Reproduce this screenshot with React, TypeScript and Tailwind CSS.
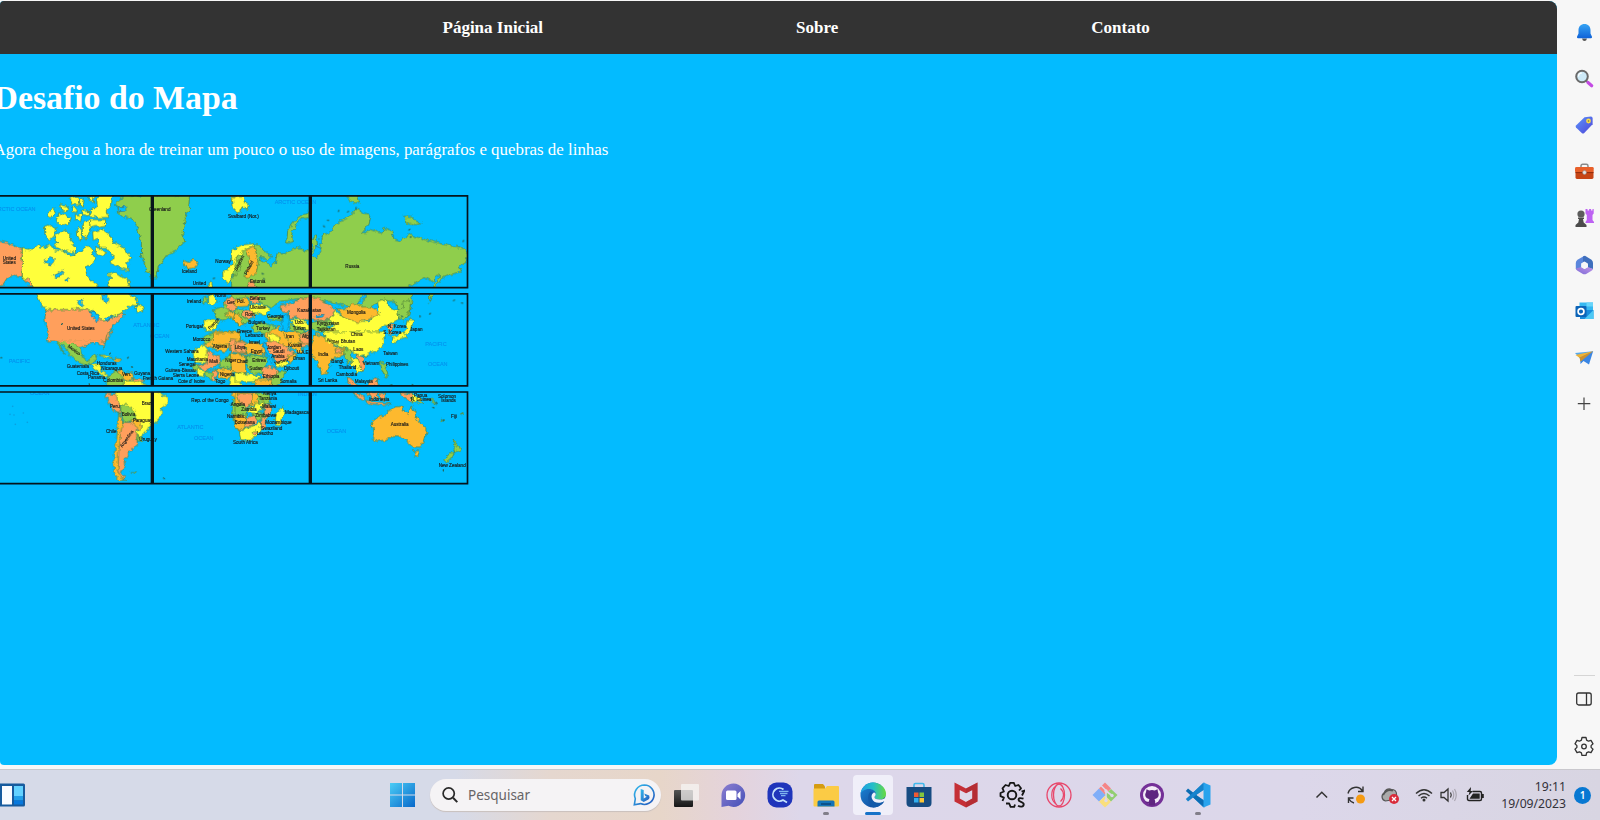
import React from "react";

type Label = [number, number, string, number?];
type Land = [string, string];

const Y = "#ffff3b";
const G = "#8fce4c";
const O = "#ff9f5c";
const A = "#fdb92e";

const northWest: Land[] = [
  [O, "M-20,164 L20,174 L45,183 L67,190 L67,278 L40,272 L22,278 L8,300 L-20,308Z"],
  [O, "M67,278 L90,284 L103,312 L88,300Z"],
  [Y, "M67,190 L85,196 L105,188 L112,180 L125,190 L150,180 L165,195 L190,198 L215,215 L235,202 L250,195 L262,178 L275,195 L280,212 L290,225 L278,232 L262,245 L258,265 L270,283 L290,298 L292,315 L102,315 L90,285 L67,278Z"],
  [Y, "M330,315 L325,292 L335,280 L325,266 L345,260 L365,275 L385,285 L395,315Z"],
  [Y, "M133,124 L150,120 L170,132 L162,150 L146,166 L135,150Z"],
  [Y, "M165,150 L195,133 L213,150 L210,165 L228,185 L225,207 L205,200 L190,197 L160,183 L175,172 L162,166Z"],
  [Y, "M229,135 L240,128 L248,142 L244,165 L230,158Z"],
  [Y, "M250,110 L270,105 L270,135 L258,165 L250,150Z"],
  [Y, "M278,140 L305,133 L330,148 L345,175 L370,188 L393,220 L380,235 L388,256 L355,248 L330,234 L340,215 L318,187 L300,187 L292,160 L280,167Z"],
  [Y, "M285,188 L302,190 L320,205 L300,214 L288,207Z"],
  [Y, "M140,94 L158,68 L168,78 L155,98Z"],
  [Y, "M168,107 L178,84 L195,90 L214,98 L207,118 L180,120Z"],
  [Y, "M180,58 L202,64 L200,80 L182,76Z"],
  [Y, "M210,38 L234,34 L237,60 L218,58Z"],
  [Y, "M238,46 L252,42 L250,66 L240,62Z"],
  [Y, "M216,68 L232,70 L230,82 L216,80Z"],
  [Y, "M226,88 L245,90 L242,110 L226,104Z"],
  [Y, "M266,34 L282,34 L280,52 L268,50Z"],
  [Y, "M290,40 L300,26 L338,26 L334,62 L318,76 L324,97 L290,98 L266,90 L276,70 L292,64Z"],
  [Y, "M246,76 L266,76 L264,92 L246,88Z"],
  [Y, "M270,104 L317,104 L316,121 L280,126 L268,118Z"],
  [G, "M350,50 L378,30 L569,30 L565,80 L556,100 L548,150 L555,170 L525,198 L500,210 L475,245 L470,276 L455,280 L440,255 L425,215 L424,170 L413,130 L395,100 L370,95 L352,78Z"],
  [A, "M551,226 L565,233 L582,222 L594,236 L582,249 L562,252Z"],
  [Y, "M693,32 L725,32 L725,78 L712,82 L706,62 L695,50Z"],
  [Y, "M668,262 L690,248 L700,225 L725,195 L725,300 L705,300 L702,265 L685,294 L670,285Z"],
  [G, "M705,240 L725,205 L725,302 L698,302Z"],
  [Y, "M624,296 L636,292 L638,310 L626,310Z"],
  [Y, "M108,320 L380,320 L414,345 L412,362 L390,360 L372,378 L358,388 L338,392 L310,410 L298,398 L285,378 L262,374 L140,374 L120,352Z"],
  [Y, "M408,366 L425,360 L432,380 L408,382Z"],
  [O, "M140,374 L262,374 L278,382 L290,392 L302,402 L312,410 L340,396 L360,388 L368,380 L374,390 L358,405 L352,415 L338,422 L333,438 L320,450 L316,468 L140,468 L146,444 L136,420 L135,395Z"],
  [G, "M606,338 L620,334 L622,350 L610,358Z"],
  [Y, "M626,330 L642,326 L652,352 L636,364 L626,356Z"],
  [G, "M640,374 L668,366 L678,345 L694,375 L690,400 L668,408 L650,398Z"],
  [O, "M678,342 L700,332 L715,344 L710,372 L690,378 L678,368Z"],
  [Y, "M612,406 L655,406 L648,428 L638,438 L618,438 L612,425Z"],
  [A, "M676,388 L700,378 L714,402 L725,418 L715,422 L698,400Z"],
  [A, "M640,446 L720,438 L720,476 L640,480Z"],
];

const northEast: Land[] = [
  [Y, "M-8,36 L25,36 L28,52 L40,60 L36,74 L22,62 L16,82 L-5,74Z"],
  [G, "M155,175 L158,135 L178,108 L205,86 L222,82 L222,98 L198,102 L182,120 L170,148 L172,170Z"],
  [G, "M0,206 L30,188 L66,176 L92,200 L110,214 L100,226 L80,214 L76,230 L95,230 L108,246 L122,230 L126,208 L150,206 L170,196 L190,184 L205,196 L230,200 L232,156 L244,150 L248,190 L258,196 L258,160 L268,142 L282,150 L300,118 L340,98 L365,70 L385,84 L408,90 L402,118 L378,148 L410,134 L440,146 L448,130 L470,138 L478,162 L500,168 L520,148 L560,160 L600,172 L640,182 L678,186 L702,208 L690,232 L672,244 L680,258 L650,268 L620,280 L600,310 L585,350 L582,322 L606,290 L618,268 L600,272 L596,290 L570,278 L548,290 L520,306 L532,340 L525,390 L495,400 L480,350 L440,345 L400,370 L330,362 L285,350 L200,340 L130,350 L110,370 L90,360 L60,340 L-10,340 L-10,280 L20,250 L12,230Z"],
  [Y, "M-10,196 L20,180 L60,176 L62,184 L35,192 L15,205 L-10,240Z"],
  [A, "M34,194 L58,184 L64,205 L70,235 L64,262 L48,278 L30,276 L32,258 L46,238 L40,215Z"],
  [O, "M36,292 L60,290 L66,310 L40,315Z"],
  [G, "M328,28 L366,30 L374,50 L356,56Z"],
  [G, "M506,94 L530,94 L545,110 L562,112 L540,122 L518,116Z"],
  [A, "M0,345 L30,338 L44,350 L38,364 L0,366Z"],
  [O, "M40,338 L70,332 L74,350 L50,356Z"],
  [Y, "M42,360 L80,356 L104,372 L90,392 L74,384 L60,388 L44,376Z"],
  [O, "M20,380 L50,376 L60,394 L38,404 L22,394Z"],
  [G, "M0,372 L22,376 L24,396 L46,408 L30,418 L0,392Z"],
  [A, "M0,386 L12,386 L28,420 L14,424 L-6,400Z"],
  [G, "M50,424 L78,414 L120,424 L126,440 L90,446 L58,440Z"],
  [G, "M96,394 L136,394 L140,404 L104,404Z"],
  [O, "M135,362 L170,354 L205,338 L250,340 L290,364 L302,378 L282,402 L246,408 L230,400 L205,408 L186,396 L164,400 L160,380 L138,382Z"],
  [Y, "M168,404 L190,400 L232,424 L222,436 L180,424Z"],
  [G, "M166,418 L188,424 L214,440 L200,446 L170,436Z"],
  [G, "M232,412 L282,404 L306,416 L270,426 L300,436 L250,442 L232,430Z"],
  [A, "M88,448 L130,424 L140,442 L190,444 L196,475 L205,505 L170,490 L130,480 L100,470Z"],
  [O, "M190,450 L222,440 L230,470 L205,490 L194,475Z"],
  [Y, "M282,402 L302,378 L338,402 L400,410 L432,380 L428,350 L450,342 L470,372 L494,378 L490,404 L468,414 L450,420 L436,428 L432,440 L446,460 L446,468 L270,468 L272,440 L300,420Z"],
  [A, "M306,372 L340,370 L350,356 L380,366 L410,366 L434,382 L406,402 L370,412 L330,400Z"],
  [G, "M486,376 L500,370 L505,350 L524,345 L525,380 L505,408 L492,400Z"],
  [O, "M455,420 L478,418 L476,430 L468,434 L474,446 L464,450Z"],
  [Y, "M520,404 L538,406 L530,420 L526,440 L500,458 L480,464 L500,448 L514,432Z"],
];

const southWest: Land[] = [
  [O, "M144,-8 L335,-8 L316,20 L312,44 L304,30 L290,22 L262,28 L240,38 L216,24 L190,16 L165,8Z"],
  [G, "M168,12 L200,18 L226,26 L244,42 L248,66 L266,80 L276,64 L290,62 L284,80 L262,90 L240,86 L218,70 L200,44 L178,22 L186,46 L196,58 L180,40Z"],
  [Y, "M298,60 L320,60 L340,70 L322,68Z"],
  [A, "M344,70 L362,72 L356,80 L342,76Z"],
  [Y, "M270,88 L298,90 L302,108 L318,118 L328,128 L310,122 L290,106Z"],
  [G, "M330,118 L350,104 L366,122 L372,140 L364,160 L318,160Z"],
  [A, "M352,104 L372,112 L396,112 L402,130 L382,140 L372,134Z"],
  [O, "M400,132 L430,134 L426,150 L400,150Z"],
  [Y, "M372,138 L400,138 L440,150 L440,168 L366,168Z"],
  [Y, "M345,166 L470,166 L500,184 L503,200 L486,220 L484,242 L466,262 L448,272 L440,288 L420,308 L408,296 L424,272 L400,255 L408,240 L385,222 L360,208 L345,196Z"],
  [O, "M316,176 L350,178 L352,196 L360,210 L360,236 L342,226 L325,200Z"],
  [G, "M362,212 L378,208 L396,220 L408,240 L396,258 L374,262 L362,240Z"],
  [A, "M392,254 L408,250 L424,268 L420,284 L400,274Z"],
  [G, "M408,300 L424,306 L428,318 L410,318Z"],
  [A, "M356,236 L370,262 L360,320 L356,380 L366,428 L380,434 L360,438 L344,420 L340,380 L350,310Z"],
  [O, "M370,262 L396,262 L414,280 L410,300 L412,328 L402,342 L384,346 L386,360 L372,372 L374,390 L364,412 L378,434 L362,428 L354,400 L356,350 L362,290Z"],
  [G, "M396,410 L410,410 L406,416Z"],
  [A, "M640,-10 L720,-12 L690,35 L672,54 L640,40 L612,28Z"],
  [G, "M606,8 L636,-6 L644,8 L620,26Z"],
  [Y, "M580,46 L612,30 L624,44 L620,84 L582,82Z"],
  [O, "M620,46 L656,66 L658,84 L636,100 L614,108 L592,94 L622,84Z"],
  [G, "M656,84 L690,58 L714,66 L706,90 L676,100 L658,96Z"],
  [O, "M684,20 L720,4 L720,52 L690,44Z"],
  [A, "M706,62 L722,54 L722,115 L704,106Z"],
  [G, "M576,90 L600,94 L596,112 L580,104Z"],
  [Y, "M590,104 L616,108 L612,126 L594,122Z"],
  [G, "M616,110 L640,110 L638,132 L618,128Z"],
  [A, "M650,102 L694,100 L704,112 L682,130 L658,128Z"],
  [O, "M636,108 L650,108 L648,142 L636,138Z"],
  [Y, "M690,126 L724,110 L724,158 L686,152Z"],
  [A, "M690,168 L724,168 L724,186 L706,190Z"],
  [G, "M697,194 L724,192 L724,232 L696,236Z"],
  [A, "M698,236 L724,236 L724,300 L710,282Z"],
];

const southEast: Land[] = [
  [O, "M-14,14 L34,20 L34,58 L-12,50Z"],
  [A, "M-14,54 L32,62 L32,118 L-10,110Z"],
  [A, "M34,22 L84,26 L90,58 L36,58Z"],
  [O, "M0,20 L28,22 L30,54 L0,46Z"],
  [G, "M34,62 L92,62 L98,80 L84,112 L58,116 L36,98Z"],
  [O, "M84,102 L102,92 L132,108 L126,132 L92,132 L78,120Z"],
  [G, "M128,112 L152,108 L140,140 L116,158 L106,140Z"],
  [Y, "M0,116 L60,118 L76,126 L60,140 L0,142Z"],
  [A, "M60,134 L112,134 L106,158 L60,158Z"],
  [O, "M90,22 L126,14 L150,34 L182,58 L162,76 L128,84 L110,60 L98,38Z"],
  [Y, "M118,82 L152,74 L160,88 L124,98Z"],
  [A, "M158,62 L184,54 L182,70 L164,84Z"],
  [Y, "M98,-6 L128,2 L134,20 L106,20Z"],
  [A, "M140,-10 L196,-8 L200,18 L186,28 L160,18Z"],
  [O, "M190,0 L228,0 L228,26 L200,26Z"],
  [A, "M240,-5 L280,12 L300,32 L330,38 L326,60 L290,74 L276,112 L262,118 L244,78 L230,58 L230,30Z"],
  [Y, "M268,-10 L446,-10 L448,24 L430,46 L398,58 L370,64 L350,48 L332,38 L300,28 L270,12Z"],
  [G, "M326,42 L346,44 L352,78 L340,86 L328,66Z"],
  [O, "M300,42 L322,40 L320,56 L302,54Z"],
  [Y, "M348,66 L370,72 L388,92 L386,106 L368,112 L362,94 L350,96Z"],
  [O, "M366,60 L384,66 L392,98 L378,110 L374,88Z"],
  [G, "M386,62 L398,62 L394,68Z"],
  [G, "M436,78 L450,88 L460,122 L450,128 L440,104Z"],
  [Y, "M472,8 L504,-8 L514,6 L490,14 L478,22Z"],
  [O, "M336,126 L352,134 L368,152 L358,154 L340,142Z"],
  [O, "M398,140 L426,128 L430,152 L400,156Z"],
  [A, "M0,172 L66,172 L72,206 L46,214 L0,208Z"],
  [O, "M6,178 L54,174 L48,210 L22,222Z"],
  [G, "M62,174 L102,176 L106,206 L76,210Z"],
  [G, "M0,208 L34,212 L34,240 L0,240Z"],
  [Y, "M60,206 L84,202 L82,224 L60,236 L38,232 L38,218 L58,216Z"],
  [O, "M84,210 L108,210 L106,238 L92,254 L90,280 L74,286 L76,262 L90,244Z"],
  [G, "M54,236 L84,232 L90,246 L72,258 L58,252Z"],
  [A, "M0,242 L34,242 L30,278 L12,290 L0,270Z"],
  [O, "M32,246 L56,244 L66,260 L48,276 L30,276Z"],
  [Y, "M12,286 L48,276 L74,262 L76,286 L64,306 L42,316 L18,314Z"],
  [O, "M52,288 L64,288 L62,298 L52,298Z"],
  [Y, "M122,240 L142,216 L148,228 L136,272 L122,270Z"],
  [O, "M356,168 L374,178 L392,192 L380,196 L362,184Z"],
  [O, "M396,172 L426,172 L430,190 L410,194Z"],
  [O, "M434,174 L452,176 L448,196 L438,192Z"],
  [O, "M392,196 L436,202 L470,206 L440,210 L396,204Z"],
  [O, "M496,172 L530,178 L530,200 L510,190Z"],
  [Y, "M530,178 L552,188 L564,206 L546,200 L530,202Z"],
  [A, "M408,262 L422,250 L446,242 L464,228 L480,216 L502,214 L506,228 L520,238 L528,210 L540,232 L546,252 L566,270 L576,290 L568,318 L556,336 L534,336 L512,318 L500,304 L478,302 L452,314 L424,320 L414,308 L418,290Z"],
  [A, "M536,348 L554,348 L548,364 L540,362Z"],
  [G, "M654,314 L670,332 L680,342 L660,354 L656,342 L664,336Z"],
  [G, "M626,374 L646,354 L658,352 L652,368 L634,384Z"],
  [G, "M576,186 L590,194 L608,208 L594,204Z"],
  [G, "M618,250 L630,256 L622,258Z"],
  [G, "M672,238 L682,234 L678,240Z"],
];

const lakes = [
  "M132,228 L150,218 L166,224 L156,240 L138,236Z",
  "M160,272 L178,264 L190,254 L186,272 L168,278Z",
  "M194,286 L208,278 L202,290Z",
  "M304,328 L324,328 L322,356 L312,352Z",
  "M232,350 L246,338 L250,356 L240,366Z",
  "M268,378 L284,380 L298,396 L288,414 L280,396Z",
  "M312,398 L334,394 L320,408Z",
  "M352,66 L376,64 L378,78 L356,80Z",
  "M845,396 L862,386 L868,402 L864,430 L852,440 L846,420Z",
  "M946,392 L972,388 L968,396 L950,398Z",
  "M1072,355 L1096,328 L1100,334 L1084,358Z",
  "M935,210 L950,180 L962,200 L946,222Z",
  "M790,470 L800,480 L830,545 L824,548 L790,492Z",
];

const labels: Label[] = [
  [8, 225, "United"], [8, 238, "States"], [447, 77, "Greenland"], [546, 264, "Iceland"], [646, 235, "Norway"],
  [578, 300, "United"], [684, 98, "Svalbard (Nor.)"], [201, 435, "United States"], [561, 353, "Ireland"],
  [557, 429, "Portugal"], [578, 467, "Morocco"], [645, 335, "North"], [680, 357, "Ger."], [630, 435, "France", -48],
  [1036, 249, "Russia"], [750, 295, "Estonia"], [710, 258, "Sweden", -62], [740, 270, "Finland", -62], [711, 355, "Pol."],
  [750, 344, "Belarus"], [750, 371, "Ukraine"], [735, 392, "Rom."], [802, 399, "Georgia"], [768, 434, "Turkey"],
  [745, 416, "Bulgaria"], [710, 444, "Greece"], [736, 457, "Lebanon"], [892, 380, "Kazakhstan"], [884, 418, "Uzb."],
  [878, 434, "Turkm."], [858, 458, "Iran"], [906, 458, "Afg."], [950, 420, "Kyrgyzstan"], [950, 437, "Tajikistan"],
  [1041, 387, "Mongolia"], [1052, 453, "China"], [1164, 430, "N. Korea"], [1150, 448, "S. Korea"], [1230, 437, "Japan"],
  [202, 486, "Mexico", 36], [200, 550, "Guatemala"], [290, 540, "Honduras"], [304, 555, "Nicaragua"],
  [230, 571, "Costa Rica"], [264, 581, "Panama"], [310, 592, "Colombia"], [366, 573, "Ven."], [402, 570, "Guyana"],
  [428, 585, "French Guiana"], [496, 503, "Western Sahara"], [560, 529, "Mauritania"], [536, 544, "Senegal"],
  [496, 562, "Guinea-Bissau"], [518, 576, "Sierra Leone"], [534, 595, "Cote d' Ivoire"], [646, 595, "Togo"],
  [638, 490, "Algeria"], [628, 534, "Mali"], [676, 530, "Niger"], [660, 574, "Nigeria"], [704, 492, "Libya"],
  [710, 535, "Chad"], [746, 478, "Israel"], [752, 505, "Egypt"], [757, 530, "Eritrea"], [748, 555, "Sudan"],
  [788, 580, "Ethiopia"], [840, 595, "Somalia"], [852, 554, "Djibouti"], [800, 491, "Jordan"], [818, 505, "Saudi"],
  [814, 519, "Arabia"], [824, 540, "Yemen", -18], [890, 506, "U.A.E."], [878, 526, "Oman"], [864, 485, "Kuwait"],
  [955, 514, "India"], [980, 469, "Nepal", 12], [1022, 474, "Bhutan"], [1060, 498, "Laos"], [994, 535, "Bangl."],
  [1016, 552, "Thailand"], [1008, 572, "Cambodia"], [1088, 541, "Vietnam"], [1150, 510, "Taiwan"],
  [1158, 544, "Philippines"], [954, 590, "Sri Lanka"], [1064, 594, "Malaysia"], [330, 669, "Peru"], [425, 661, "Brazil"],
  [365, 692, "Bolivia"], [398, 712, "Paraguay"], [318, 745, "Chile"], [418, 768, "Uruguay"], [367, 788, "Argentina", -55],
  [574, 650, "Rep. of the Congo"], [692, 663, "Angola"], [681, 698, "Namibia"],
  [776, 644, "Tanzania"], [790, 629, "Kenya"], [786, 669, "Malawi"], [724, 679, "Zambia"], [766, 697, "Zimbabwe"],
  [796, 716, "Mozambique"], [855, 688, "Madagascar"], [784, 736, "Swaziland"], [770, 750, "Lesotho"],
  [699, 776, "South Africa"], [704, 716, "Botswana"], [1108, 648, "Indonesia"], [1242, 635, "Papua"],
  [1232, 648, "N. Guinea"], [1172, 724, "Australia"], [1314, 638, "Solomon"], [1324, 652, "Islands"],
  [1353, 698, "Fiji"], [1316, 847, "New Zealand"],
];

const waters: Label[] = [
  [-18, 79, "ARCTIC OCEAN"], [824, 57, "ARCTIC OCEAN"], [400, 425, "ATLANTIC"], [450, 458, "OCEAN"],
  [26, 533, "PACIFIC"], [90, 629, "OCEAN"], [532, 732, "ATLANTIC"], [582, 766, "OCEAN"], [980, 744, "OCEAN"],
  [1276, 483, "PACIFIC"], [1284, 543, "OCEAN"], [894, 634, "INDIAN"],
];

const specks = [
  [4, 518], [492, 880], [268, 598], [1016, 78], [1044, 80], [984, 106], [972, 124], [1068, 70],
  [1390, 168], [1362, 346], [1386, 354], [1206, 394], [1260, 394], [1290, 386], [384, 518], [396, 546],
  [1238, 600], [1330, 856], [330, 506], [642, 280], [788, 266], [792, 282], [1232, 156], [1228, 134],
  [1174, 600], [1300, 668], [1310, 654], [1330, 706], [186, 417],
];

const atolls = [[30, 688], [42, 690], [70, 684], [46, 718], [82, 712], [38, 664]];

const Terrain = ({ lands, x, y }: { lands: Land[]; x: number; y: number }) => (
  <g transform={`translate(${x} ${y})`}>
    {lands.map(([fill, d], i) => (
      <path key={i} d={d} fill={fill} />
    ))}
  </g>
);

const WorldMap = () => (
  <svg className="block h-[305px] w-[480px]" viewBox="0 0 1440 915" fontFamily="Liberation Sans, sans-serif">
    <defs>
      <filter id="coast" x="0" y="0" width="100%" height="100%" colorInterpolationFilters="sRGB">
        <feTurbulence type="fractalNoise" baseFrequency="0.075" numOctaves="2" seed="4" />
        <feDisplacementMap in="SourceGraphic" scale="17" xChannelSelector="R" yChannelSelector="G" />
      </filter>
      <clipPath id="tiles">
        <path d="M0,32H1404V308H0Z M0,326H1404V602H0Z M0,621H1404V896H0Z" />
      </clipPath>
    </defs>
    <path d="M0,32H1404V308H0Z M0,326H1404V602H0Z M0,621H1404V896H0Z" fill="#00bfff" />
    <g clipPath="url(#tiles)">
      <g filter="url(#coast)" stroke="#4b7c38" strokeWidth="2" strokeLinejoin="round">
        <Terrain lands={southWest} x={0} y={450} />
        <Terrain lands={northWest} x={0} y={0} />
        <Terrain lands={northEast} x={705} y={0} />
        <Terrain lands={southEast} x={705} y={450} />
        <path d="M160,466H306L300,474L200,474Z" fill={O} stroke="none" />
        <path d="M984,462H1140V474H984Z" fill={Y} stroke="none" />
        <g fill="#00bfff" stroke="#2b6f86">
          {lakes.map((d) => (
            <path key={d} d={d} />
          ))}
        </g>
      </g>
      <g fill="#23655b">
        {specks.map(([cx, cy], i) => (
          <ellipse key={i} cx={cx} cy={cy} rx="4" ry="2" transform={`rotate(${i * 37} ${cx} ${cy})`} />
        ))}
      </g>
      <g fill="#0a9fe0">
        {atolls.map(([cx, cy], i) => (
          <circle key={i} cx={cx} cy={cy} r="2.500" />
        ))}
      </g>
      <g fontSize="16.5" fill="#0590ec" stroke="#0590ec" strokeWidth="0.3">
        {waters.map(([x, y, t], i) => (
          <text key={i} x={x} y={y}>{t}</text>
        ))}
      </g>
      <g fontSize="13.8" fill="#1a1a1a" stroke="#1a1a1a" strokeWidth="0.45">
        {labels.map(([x, y, t, r], i) => (
          <text key={i} x={x} y={y} transform={r ? `rotate(${r} ${x} ${y})` : undefined}>{t}</text>
        ))}
      </g>
    </g>
    <g fill="none" stroke="#06141c" strokeWidth="5">
      <path d="M-6,32.5H1402.500V308H-6 M-6,326.500H1402.500V602.500H-6 M-6,621H1402.500V896H-6" />
      <path strokeWidth="10" d="M457,32V308M457,326V602M457,621V896M931,32V308M931,326V602M931,621V896" />
    </g>
  </svg>
);

const Svg = ({ box = 26, className = "h-[26px] w-[26px]", children }: { box?: number; className?: string; children: React.ReactNode }) => (
  <svg viewBox={`0 0 ${box} ${box}`} className={`block shrink-0 ${className}`} fill="none">
    {children}
  </svg>
);

const side = "h-[20px] w-[20px]";

const sideIcons = [
  <Svg key="bell" box={20} className={side}>
    <defs><linearGradient id="bell" x1="0" y1="0" x2="0" y2="1"><stop stopColor="#36a4f4" /><stop offset="1" stopColor="#0f62d8" /></linearGradient></defs>
    <path d="M8 16.500h5q-.6 2.500-2.500 2.500T8 16.500Z" fill="#555" />
    <path d="M10.500 2c3.600 0 6 2.600 6 6v3.600l1.500 3.200q.3 1.400-.9 1.400H3.900q-1.200 0-.9-1.400l1.500-3.200V8c0-3.400 2.400-6 6-6Z" fill="url(#bell)" />
  </Svg>,
  <Svg key="find" box={20} className={side}>
    <path d="m12.500 12 2 1.800" stroke="#666" strokeWidth="2" />
    <path d="m14 13.500 3.700 3.200" stroke="#c44be4" strokeWidth="3.200" strokeLinecap="round" />
    <circle cx="8" cy="7.500" r="5.800" fill="#cdeaf8" stroke="#6a6a6a" strokeWidth="2" />
    <path d="M4.500 7.500A3.500 3.500 0 0 1 8 4" stroke="#fff" strokeWidth="1.200" />
  </Svg>,
  <Svg key="tag" box={20} className={side}>
    <defs><linearGradient id="tag" x1="0" y1="0" x2="1" y2="1"><stop stopColor="#5b94fb" /><stop offset="1" stopColor="#4f46d8" /></linearGradient></defs>
    <path d="M10.500 2.200 17 1.500q1.500 0 1.600 1.500v6.300L10 18.200q-1 .8-2 0L2 12.400q-.8-1 0-2Z" fill="url(#tag)" />
    <circle cx="14.500" cy="6" r="2.400" fill="#f8d94a" /><circle cx="14.500" cy="6" r=".8" fill="#6d7450" />
  </Svg>,
  <Svg key="tools" box={20} className={side}>
    <path d="M7 5.500V4q0-1.700 1.700-1.700h3.600Q14 2.300 14 4v1.500" stroke="#8a8a8a" strokeWidth="1.500" />
    <rect x="1.500" y="9" width="18" height="8" rx="1.400" fill="#c64516" />
    <path d="M2.500 5h16q1.200 0 1.200 1.200V9q0 1.600-1.600 1.600H2.900Q1 10.600 1 9V6.200Q1 5 2.500 5Z" fill="#e8602a" />
    <path d="M1.500 10.600h18" stroke="#8f2c0d" /><circle cx="10.500" cy="10.500" r="1.900" fill="#e5e2e2" stroke="#888" strokeWidth=".5" />
  </Svg>,
  <Svg key="chess" box={20} className={side}>
    <path d="M11.500 1h2v1.500h1.600V1h2v1.500h1.400V1h1.200v4.500L18.500 7v5l1.500 2v1h-8.500v-1l1.300-2V7l-1.300-1.500Z" fill="#bd62f2" />
    <circle cx="7" cy="6" r="3.600" fill="#5c5c5c" />
    <path d="M4 9.500h6v1.500H9l.7 3.500L12.500 17v2h-11v-2l2.800-2.500L5 11H4Z" fill="#4c4c4c" />
  </Svg>,
  <Svg key="m365" box={20} className={side}>
    <defs><linearGradient id="hexa" x1="0" y1="1" x2="1" y2="0"><stop stopColor="#7b6cd6" /><stop offset="1" stopColor="#c193e8" /></linearGradient></defs>
    <path d="M10.500.8 3.500 4.800Q1.800 6 1.800 8v6l5 2 .7-1V8.500l4.500-2.600Z" fill="#5a86dc" />
    <path d="m9 1.500 2-.8 6.500 4Q19 6 19 8v6l-5-1V9.300L9 6.200Z" fill="#3f6fbd" />
    <path d="M1.800 13.500 7.500 12l3 2 3.500-2 5 2q-.3 1-1.500 1.800l-5 3q-2 1-4 0l-5-3q-1.500-.8-1.700-2.300Z" fill="url(#hexa)" />
    <path d="m10.500 6.500 3.300 1.900v3.800l-3.300 1.900-3.300-1.900V8.400Z" fill="#f7f7f7" />
  </Svg>,
  <Svg key="mail" box={20} className={side}>
    <path d="M5.500 1.500H19v8H5.500Z" fill="#35b8f1" /><path d="M12.500 1.500H19v4h-6.500Z" fill="#67d5fa" />
    <path d="M6 9h13.500v9H6Z" fill="#198ddc" /><path d="m19.500 9-9 9h9Z" fill="#4dc9f5" />
    <rect x="1.500" y="5" width="11" height="11" rx="1" fill="#0b64b8" />
    <circle cx="7" cy="10.500" r="2.900" stroke="#fff" strokeWidth="1.700" />
  </Svg>,
  <Svg key="plane" box={20} className={side}>
    <path d="M1 5 19 3.200 7.500 12Z" fill="#54a8ec" /><path d="M19.200 3 15 16.500 9.500 13 6.500 16l-.3-6Z" fill="#3a86e4" />
    <path d="M1.500 7 19 3.200 6 10Z" fill="#efb336" /><path d="M5.500 9.600 19 3.200 6.500 13.800Z" fill="#c99031" />
  </Svg>,
  <Svg key="plus" box={20} className={side}>
    <path d="M10 3.500V16M3.800 9.700h12.500" stroke="#444" strokeWidth="1.200" />
  </Svg>,
];

const gearPath = "M8 1.500h4l.6 2.600 1.900 1.100 2.500-.8 2 3.400-1.900 1.800v1.800l1.900 1.800-2 3.400-2.500-.8-1.900 1.100-.6 2.600H8l-.6-2.600-1.900-1.100-2.500.8-2-3.400 1.900-1.800V9.600L1 7.800l2-3.400 2.500.8 1.900-1.100Z";

const taskIcons = [
  <Svg key="task">
    <defs><linearGradient id="dark" x1="0" y1="0" x2="0" y2="1"><stop stopColor="#555" /><stop offset="1" stopColor="#151515" /></linearGradient></defs>
    <rect x="0" y="8" width="19" height="17" rx="1" fill="url(#dark)" />
    <rect x="7" y="2" width="18" height="16.500" rx="1" fill="#f6f4f3" fillOpacity=".75" />
  </Svg>,
  <Svg key="chat">
    <defs><linearGradient id="chat" x1="0" y1="0" x2="1" y2="1"><stop stopColor="#8d7fd0" /><stop offset="1" stopColor="#4450b8" /></linearGradient></defs>
    <path d="M13.500 1.500a11.700 11.700 0 1 1-5 22.300L1.500 25V14a12 12 0 0 1 12-12.500Z" fill="url(#chat)" />
    <rect x="6" y="8.500" width="10.500" height="9.500" rx="1.500" fill="#fff" /><path d="m17.500 12 3-3v8.500l-3-3Z" fill="#fff" />
  </Svg>,
  <Svg key="cq">
    <rect x=".5" y=".5" width="25" height="25" rx="9" fill="#1f35bb" />
    <path d="M16.500 7.500A6.500 6.500 0 1 0 16 18l4 2.500" stroke="#c4e2fc" strokeWidth="1.800" /><path d="M12 9.300h9.500M13 11.500h7.500M14 13.700h4.500" stroke="#7eb3ee" strokeWidth="1.300" />
  </Svg>,
  <Svg key="files">
    <path d="M1 3q0-1 1-1h8l2 2.500v4H1Z" fill="#d59c11" /><path d="M1 6.500 12 6.500 14 4h11q1 0 1 1v18.500q0 1-1 1H1.500q-1 0-1-1V7Z" fill="#fbcb45" />
    <path d="M4.500 24.500V20q0-1.500 1.500-1.500h14q1.500 0 1.500 1.500v4.500Z" fill="#1474b8" /><path d="M8 22h10" stroke="#093f70" strokeWidth="1.300" />
  </Svg>,
  <Svg key="edge">
    <defs>
      <linearGradient id="ea" x1="0" y1="0" x2="1" y2="0"><stop stopColor="#1e9de4" /><stop offset=".5" stopColor="#26bfc7" /><stop offset="1" stopColor="#68da3d" /></linearGradient>
      <linearGradient id="eb" x1="0" y1="0" x2="1" y2="1"><stop stopColor="#1b88d8" /><stop offset="1" stopColor="#103e91" /></linearGradient>
    </defs>
    <circle cx="13" cy="13" r="12.500" fill="url(#eb)" />
    <path d="M.5 13C.5 6 6 .5 13 .5S26 6 26 11.500c0 4-3 6-6.500 6-3 0-5-1-5-2.300 0-.9 1.200-1.500 1.200-3.500 0-2.500-3-4.700-6.500-4.700C4.500 7 .8 9.500.5 13Z" fill="url(#ea)" />
    <path d="M11 11.700c-2 3-1 8.500 5 9.500 3.500.6 6.500-.8 8.200-2l.8.800 1-2V15c-1.500 2-4 2.600-6.500 2.500-3 0-5-1-5-2.300 0-.9 1.200-1.500 1.200-3 0-1.800-3.200-2.300-4.700-.5Z" fill="#eff2fa" />
    <path d="M10.500 9.500C7 13 7 21 13 25.400c5 .2 9.500-2.700 11.300-6.200-5 2.800-11 2-12.500-3-.7-2.400.1-4.700 2.200-5.700Z" fill="#125aa9" />
  </Svg>,
  <Svg key="store">
    <path d="M8 6V3q0-1.500 1.500-1.500h7Q18 1.500 18 3v3" stroke="#41b9ec" strokeWidth="1.600" />
    <path d="M.5 5h25v16q0 4-4 4h-17q-4 0-4-4Z" fill="#174c82" />
    <path d="M8 10.500h4.500V15H8Z" fill="#f05a32" /><path d="M13.500 10.500H18V15h-4.500Z" fill="#83c63e" /><path d="M8 16h4.500v4.500H8Z" fill="#32afee" /><path d="M13.500 16H18v4.500h-4.500Z" fill="#fcc636" />
  </Svg>,
  <Svg key="mc">
    <path d="m1.500.5 11.500 6 11.500-6v19L13 25.500l-11.500-6Z" fill="#c52f36" /><path d="m6.700 8 6.300 3.200L19.300 8v8.500L13 20l-6.300-3.500Z" fill="#dfd9e9" />
    <path d="m13 6.500 11.500-6v19L13 25.500V20l6.300-3.500V8L13 11.200Z" fill="#a82b31" fillOpacity=".55" />
  </Svg>,
  <Svg key="cog">
    <path d="M20 8.500 22 6.300 19.500 3l-3.300 1-1.400-3.200h-3.600L9.800 4 6.500 3 3.500 6.300l1.400 3.200L1.500 11v3.200l3.400 1.400-1.400 3.400M7 21.500l3.200 0 1.400 3.400h3.600l.8-2.400M22.500 9.500l3-1-2.500 5" stroke="#161616" strokeWidth="1.800" strokeLinejoin="round" />
    <circle cx="13" cy="13" r="4.300" stroke="#161616" strokeWidth="1.900" />
    <path d="M24.500 16.700q-5-1.500-5 1.100c0 2.500 5.200 1.500 5.200 4.500 0 3-3.700 2.700-5.700 1.500" stroke="#161616" strokeWidth="1.900" />
  </Svg>,
  <Svg key="opera">
    <circle cx="13" cy="13" r="12" stroke="#e8476b" strokeWidth="1.300" /><ellipse cx="13" cy="13" rx="5.500" ry="11" stroke="#e8476b" strokeWidth="1.300" />
    <path d="M9.500 4.500C4.500 8 4.500 18 9.500 21.500M14.500 6.500c4 3.500 4 9.500 0 13" stroke="#e8476b" strokeWidth="1.200" />
  </Svg>,
  <Svg key="git">
    <path d="M7 6.500 13.500 13 7 19.500.5 13Z" fill="#80aef8" />
    <path d="m13 .5 6 6-6 6-6-6Z" fill="#f58586" /><path d="m19 7 6.500 6L19 19.500 12.500 13Z" fill="#92ce70" /><path d="m13 14 6 5.800-6 5.700-6-5.700Z" fill="#fadf7c" />
    <path d="m9 3.500 5 5v10M14 9l6 4.500" stroke="#dedaea" strokeWidth="1.600" /><circle cx="14" cy="9" r="1.700" fill="#dedaea" /><circle cx="20" cy="13.500" r="1.700" fill="#dedaea" /><circle cx="14" cy="18.500" r="1.700" fill="#dedaea" />
  </Svg>,
  <Svg key="octo">
    <circle cx="13" cy="13" r="12" fill="#743097" /><circle cx="13" cy="13" r="9" fill="#f2ebf6" />
    <path d="M7.500 7.200 10.200 8.500q2.800-.8 5.600 0l2.700-1.300.5 3q1.200 1.800.5 4-1 2.600-4 3l.7 1.800v4.500h-6.400v-2.300c-2 .4-3-.5-3.800-2.200 1.400-.3 1.600 1.200 3.800.7l.6-2.500q-3-.4-4-3-.7-2.200.6-4Z" fill="#5e2580" />
  </Svg>,
  <Svg key="code">
    <path d="m18.500.5-13 12.500 13 12.500 1-7L11 13l8.500-5.500Z" fill="#1683cd" /><path d="m3 6.500 16.500 13v6L.8 9Z" fill="#0b6cb3" /><path d="m3 19.500 16.500-13v-6L.8 17Z" fill="#1683cd" />
    <path d="m18.500.5 7 3v19l-7 3Z" fill="#29a3ed" />
  </Svg>,
];

const Clock = () => (
  <div className="w-[70px] text-right font-['Noto_Sans',sans-serif] text-[12.2px] leading-[17px] text-[#333139]">
    <div>19:11</div>
    <div>19/09/2023</div>
  </div>
);

const Taskbar = () => (
  <footer className="flex h-[51px] shrink-0 items-center border-t border-[#c9c8cd] bg-[linear-gradient(90deg,#d6dae8_0px,#d6dae8_455px,#e5d7cf_550px,#e7d6c9_660px,#e4d3dc_735px,#ddd7ea_800px,#dcd7ea_1300px,#d8d5e2_1600px)]">
    <div className="w-[390px]">
      <Svg>
        <rect x="-2" y="1.500" width="27" height="23" rx="1.500" fill="#175b9e" /><path d="M2 4h10v18.500H2Z" fill="#fbfcff" />
        <path d="M14 4h9v10h-9Z" fill="#63d2ff" /><path d="M14 14h9v4.500h-9Z" fill="#219fe9" /><path d="M14 18.500h9v4h-9Z" fill="#0878dd" />
      </Svg>
    </div>
    <div className="w-[40px]">
      <Svg>
        <defs><linearGradient id="win" x1="0" y1="0" x2="1" y2="1"><stop stopColor="#4bcdf6" /><stop offset="1" stopColor="#0868ca" /></linearGradient></defs>
        <path d="M0 1h12v11.500H0ZM13 1h12v11.500H13ZM0 13.500h12V25H0ZM13 13.500h12V25H13Z" fill="url(#win)" />
      </Svg>
    </div>
    <div className="mr-[2.250px] flex h-[32px] w-[231px] items-center rounded-full bg-[#f5f3f5] pr-[5px] pl-[11px] shadow-[0_1px_1px_#c9c0bd]">
      <Svg box={18} className="h-[18px] w-[18px]">
        <circle cx="7.700" cy="7.500" r="5.600" stroke="#292929" strokeWidth="1.700" /><path d="m12 11.800 4.300 4.300" stroke="#292929" strokeWidth="2" />
      </Svg>
      <span className="ml-[9px] flex-1 font-['Noto_Sans',sans-serif] text-[13.500px] text-[#666466]">Pesquisar</span>
      <Svg box={24} className="h-[24px] w-[24px]">
        <defs><linearGradient id="bing" x1="0" y1="0" x2="1" y2="1"><stop stopColor="#31b9ec" /><stop offset="1" stopColor="#2457bd" /></linearGradient></defs>
        <path d="M12.500 2a9.700 9.700 0 1 1-4 18.600l-6.200 1.200 1-6A10 10 0 0 1 12.500 2Z" stroke="url(#bing)" strokeWidth="1.600" />
        <path d="m8.700 6 3 1v8.500l3-1.700-1.500-.8-1-2.600 5 2q1 2.500-.8 4l-4.700 2.600-3-1.800Z" fill="url(#bing)" />
      </Svg>
    </div>
    <div className="flex">
      {taskIcons.map((icon, i) => (
        <div key={i} className="flex w-[46.500px] justify-center">
          <div className={`relative flex h-[40px] w-[40px] items-center justify-center rounded-[4px] ${i === 4 ? "bg-[#f0eff9]" : ""}`}>
            {icon}
            {i === 4 && <span className="absolute bottom-0 h-[3px] w-[16px] rounded-full bg-[#1672c8]" />}
            {(i === 3 || i === 11) && <span className="absolute bottom-0 h-[3px] w-[6px] rounded-full bg-[#817e89]" />}
          </div>
        </div>
      ))}
    </div>
    <div className="ml-auto flex items-center pr-[9px]">
      <Svg box={20} className="mr-[14px] h-[20px] w-[20px]"><path d="m4.500 12.500 5.300-5.300 5.300 5.300" stroke="#333" strokeWidth="1.500" /></Svg>
      <Svg box={20} className="mr-[14px] h-[20px] w-[20px]">
        <path d="M2 8.500A8 8 0 0 1 16.500 6M17 1.500V6.500h-5M8 18A8 8 0 0 1 3 14M2.500 18v-5h5" stroke="#333" strokeWidth="1.400" /><circle cx="14.500" cy="14" r="4.500" fill="#f59b13" />
      </Svg>
      <Svg box={20} className="mr-[15px] h-[20px] w-[20px]">
        <path d="M5.500 16a4.300 4.300 0 0 1-1.200-8C5 4.500 8.500 3 11.500 4.500c3 0 5 2 5 4.500v5Z" fill="#aaa" stroke="#555" strokeWidth="1.200" /><path d="M3 10c2-4 6-6 10-4.500" stroke="#555" strokeWidth="2" />
        <circle cx="14" cy="14" r="5" fill="#d92c3b" /><path d="m12 12 4 4m0-4-4 4" stroke="#fff" strokeWidth="1.300" />
      </Svg>
      <Svg box={18} className="mr-[7px] h-[18px] w-[18px]">
        <path d="M1 7.500Q9 0 17 7.500M3.500 10Q9 5 14.500 10M6 12.300q3-2.500 6 0" stroke="#333" strokeWidth="1.400" /><circle cx="9" cy="14" r="1.500" fill="#333" />
      </Svg>
      <Svg box={18} className="mr-[8px] h-[18px] w-[18px]">
        <path d="M1 6.500h3L8 3v12l-4-3.500H1Z" stroke="#333" strokeWidth="1.300" /><path d="M10.500 6.500q1.500 2.500 0 5" stroke="#333" strokeWidth="1.200" /><path d="M12.500 4.500q2.500 4.500 0 9M14.500 3q3.500 6 0 12" stroke="#aaa6b1" strokeWidth="1.200" />
      </Svg>
      <Svg box={18} className="mr-[12px] h-[18px] w-[18px]">
        <path d="M3 14.500q-1.500 0-1.500-1.500V9M6.500 5.500H14q1.500 0 1.500 1.500v6q0 1.500-1.500 1.500H3" stroke="#222" strokeWidth="1.400" /><path d="m3.500 12.700 3.500-5.200h6.700v5.200ZM16 8h1.800v4H16Z" fill="#222" /><path d="M5 1 .8 6h2.700L2.500 9.500 7 5H4.700Z" fill="#222" />
      </Svg>
      <Clock />
      <span className="ml-[8px] flex h-[17px] w-[17px] items-center justify-center rounded-full bg-[#0878d2] font-['Noto_Sans',sans-serif] text-[10px] font-semibold text-white">1</span>
    </div>
  </footer>
);

const Sidebar = () => (
  <aside className="flex w-[43px] shrink-0 flex-col items-center pt-[9px] pl-[11px]">
    {sideIcons.map((icon, i) => (
      <div key={i} className="flex h-[46.500px] items-center">{icon}</div>
    ))}
    <div className="mt-auto h-[1.500px] w-[21px] bg-[#d5d5d5]" />
    <div className="flex h-[46.500px] items-center">
      <Svg box={20} className={side}><rect x="2.700" y="4" width="14.500" height="12" rx="2" stroke="#333" strokeWidth="1.300" /><path d="M12.500 4v12" stroke="#333" strokeWidth="1.300" /></Svg>
    </div>
    <div className="flex h-[46.500px] items-center">
      <Svg box={20} className={side}><path d={gearPath} stroke="#333" strokeWidth="1.300" strokeLinejoin="round" /><circle cx="10" cy="10.500" r="2.300" stroke="#333" strokeWidth="1.300" /></Svg>
    </div>
  </aside>
);

export default function App() {
  return (
    <div className="flex h-[820px] w-[1600px] flex-col overflow-hidden bg-[#f7f7f7]">
      <div className="flex h-[769px] shrink-0">
        <main className="mt-px h-[764px] w-[1557px] overflow-hidden rounded-[8px] rounded-l-[4px] bg-[#03bbff] font-['Liberation_Serif',serif] text-white">
          <nav className="flex h-[53px] items-center gap-[253px] bg-[#333] pl-[442.500px] text-[17px] font-bold">
            <a>Página Inicial</a>
            <a>Sobre</a>
            <a>Contato</a>
          </nav>
          <h1 className="mt-[24px] -ml-[6.500px] text-[33.800px] leading-[40px] font-bold">Desafio do Mapa</h1>
          <p className="mt-[22px] -ml-[6.500px] text-[16.900px] leading-[20px]">
            Agora chegou a hora de treinar um pouco o uso de imagens, parágrafos e quebras de linhas
          </p>
          <div className="mt-[25px]">
            <WorldMap />
          </div>
        </main>
        <Sidebar />
      </div>
      <Taskbar />
    </div>
  );
}
